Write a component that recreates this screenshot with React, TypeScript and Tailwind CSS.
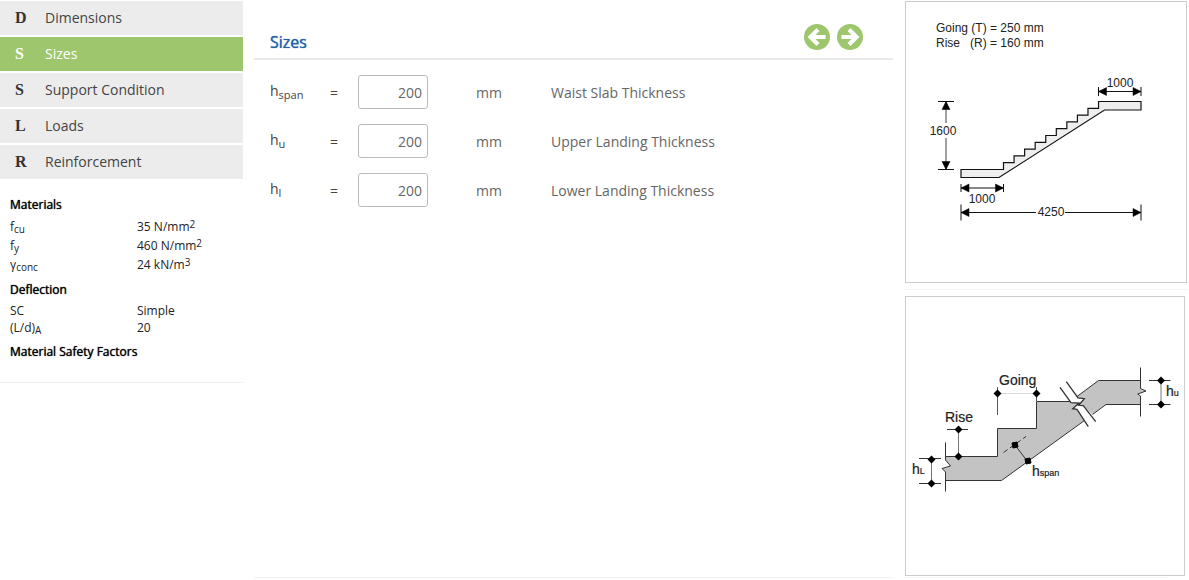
import { useState } from 'react'
import type { ReactNode } from 'react'

const menu = [
  { letter: 'D', label: 'Dimensions' },
  { letter: 'S', label: 'Sizes' },
  { letter: 'S', label: 'Support Condition' },
  { letter: 'L', label: 'Loads' },
  { letter: 'R', label: 'Reinforcement' },
]

const sizes = [
  { id: 'h-span', sub: 'span', description: 'Waist Slab Thickness' },
  { id: 'h-u', sub: 'u', description: 'Upper Landing Thickness' },
  { id: 'h-l', sub: 'l', description: 'Lower Landing Thickness' },
]

function Sidebar() {
  const [active, setActive] = useState(1)

  return (
    <aside className="w-[243px] shrink-0">
      <nav className="flex flex-col gap-0.5 pt-px">
        {menu.map((item, i) => (
          <button
            key={item.label}
            type="button"
            onClick={() => setActive(i)}
            className={`flex h-[34px] items-center pl-[15px] text-left text-sm ${
              i === active ? 'bg-[#9dc66d] text-white' : 'bg-[#ececec] text-[#444]'
            }`}
          >
            <span
              className={`w-[30px] font-['Liberation_Serif',serif] text-base font-bold ${
                i === active ? 'text-white' : 'text-[#333]'
              }`}
            >
              {item.letter}
            </span>
            {item.label}
          </button>
        ))}
      </nav>

      <div className="border-b border-[#f1f1f1] px-2.5 pt-[17px] pb-[21px] text-xs text-[#222]">
        <Heading>Materials</Heading>
        <dl className="mb-[7px] pt-[3px]">
          <Property name={<>f<Sub>cu</Sub></>} value={<>35 N/mm<Sup>2</Sup></>} />
          <Property name={<>f<Sub>y</Sub></>} value={<>460 N/mm<Sup>2</Sup></>} />
          <Property name={<>γ<Sub>conc</Sub></>} value={<>24 kN/m<Sup>3</Sup></>} />
        </dl>
        <Heading>Deflection</Heading>
        <dl className="mb-[7px] pt-[3px]">
          <Property name="SC" value="Simple" tight />
          <Property name={<>(L/d)<Sub>A</Sub></>} value="20" tight />
        </dl>
        <Heading>Material Safety Factors</Heading>
      </div>
    </aside>
  )
}

function Heading({ children }: { children: ReactNode }) {
  return <h3 className="leading-[18px] text-black [text-shadow:0_0_1px_currentColor]">{children}</h3>
}

function Sub({ children }: { children: ReactNode }) {
  return <sub className="text-[10px]">{children}</sub>
}

function Sup({ children }: { children: ReactNode }) {
  return <sup className="-top-[3px] text-[10px]">{children}</sup>
}

function Property({ name, value, tight }: { name: ReactNode; value: ReactNode; tight?: boolean }) {
  return (
    <div className={`flex items-center ${tight ? 'h-[17px]' : 'h-[19px]'}`}>
      <dt className="w-[127px]">{name}</dt>
      <dd>{value}</dd>
    </div>
  )
}

function ArrowIcon({ flip }: { flip?: boolean }) {
  return (
    <svg width="26" height="26" viewBox="0 0 26 26" fill="none" stroke="#fff" strokeWidth="4.2">
      <circle cx="13" cy="13" r="13" fill="#9dc66d" stroke="none" />
      <path d={flip ? 'M4.5 13H19M12 5.5L19.5 13L12 20.5' : 'M21.5 13H7M14 5.5L6.5 13L14 20.5'} />
    </svg>
  )
}

function SizesForm() {
  return (
    <main className="mr-3 ml-[11px] flex min-h-[578px] flex-1 flex-col border-b border-[#f1f1f1]">
      <header className="flex h-[60px] items-end justify-between border-b-2 border-[#eaeaea] pr-[30px] pb-2 pl-4">
        <h2 className="text-base leading-4 text-[#2460a7] [text-shadow:0_0_1px_currentColor]">Sizes</h2>
        <div className="flex gap-[7px]">
          <button type="button" aria-label="Previous">
            <ArrowIcon />
          </button>
          <button type="button" aria-label="Next">
            <ArrowIcon flip />
          </button>
        </div>
      </header>

      <form className="flex flex-col gap-[15px] pt-[15px] pl-4 text-sm text-[#666]">
        {sizes.map((size) => (
          <div key={size.id} className="grid grid-cols-[60px_28px_118px_75px_1fr] items-center">
            <label htmlFor={size.id} className="pb-0.5 text-[#444]">
              h<sub className="text-[11px]">{size.sub}</sub>
            </label>
            <span className="pt-0.5 text-[#444]">=</span>
            <input
              id={size.id}
              type="text"
              defaultValue="200"
              className="h-[34px] w-[70px] rounded-[3px] border border-[#bbb] px-[5px] text-right"
            />
            <span className="pt-0.5">mm</span>
            <span className="pt-0.5">{size.description}</span>
          </div>
        ))}
      </form>
    </main>
  )
}

// Pair of solid arrow heads at the ends of a horizontal dimension line
function ArrowHeads({ x1, x2, y }: { x1: number; x2: number; y: number }) {
  return <path d={`M${x1} ${y}l8 -4v8zM${x2} ${y}l-8 -4v8z`} fill="#000" stroke="#000" strokeWidth="0.5" />
}

function StairDiagram() {
  // ten risers going up from the lower landing
  let steps = ''
  for (let i = 0; i < 10; i++) {
    steps += `V${167.5 - 6.8 * (i + 1)}`
    if (i < 9) steps += `H${97.5 + 10.56 * (i + 1)}`
  }

  return (
    <svg
      viewBox="0 0 280 280"
      className="w-full font-['Liberation_Sans',sans-serif] text-xs"
      fill="none"
      stroke="#111"
    >
      <path d={`M55 167.5H97.5${steps}H235V108H198.5L93 175.5H55Z`} fill="#eee" strokeWidth="1.2" />

      <path d="M192.5 89.5H235M192.5 85V94M235 85V94" />
      <ArrowHeads x1={192.5} x2={235} y={89.5} />

      <path d="M40 99.5V121M40 136V167.5" stroke="#444" />
      <path d="M32 99.5H48M32 167.5H48" />
      <path d="M40 99.5l-4 8h8zM40 167.5l-4 -8h8z" fill="#000" stroke="#000" strokeWidth="0.5" />

      <path d="M55 186H97.5M55 182V190M97.5 182V190" />
      <ArrowHeads x1={55} x2={97.5} y={186} />

      <path d="M55 210.5H130M159 210.5H235M55 202.5V218.5M235 202.5V218.5" />
      <ArrowHeads x1={55} x2={235} y={210.5} />

      <g fill="#222" stroke="none">
        <text x="30" y="30">Going (T) = 250 mm</text>
        <text x="30" y="45">Rise</text>
        <text x="64" y="45">(R) = 160 mm</text>
        <g textAnchor="middle">
          <text x="214" y="85">1000</text>
          <text x="37" y="133">1600</text>
          <text x="76" y="201">1000</text>
          <text x="145" y="214">4250</text>
        </g>
      </g>
    </svg>
  )
}

function Dot({ x, y }: { x: number; y: number }) {
  return <path d={`M${x - 4} ${y}l4 -4l4 4l-4 4z`} fill="#000" stroke="none" />
}

function DetailDiagram() {
  return (
    <svg
      viewBox="0 0 278 278"
      className="w-full font-['Liberation_Sans',sans-serif] text-sm"
      fill="none"
      stroke="#333"
    >
      {/* concrete */}
      <path
        d="M39.5 159.5H91.5V131.5H130.5V104.5H164L165 105.7L173 106L166.7 111.7L171 112.3L178.5 123.5L95.5 183.5H39.5V175L36 171.5L44.5 169L39.5 163Z"
        fill="#c3c3c3"
        stroke="none"
      />
      <path
        d="M171 99.5L192.5 83.5H234.5V91.5L240 94L231.7 97L234.5 99V107.5H200L186.5 117.5L177.3 108.7L172.7 108.3L178.3 101.7L172 101Z"
        fill="#c3c3c3"
        stroke="none"
      />
      <path d="M39.5 159.5H91.5V131.5H130.5V104.5H164M178.5 123.5L95.5 183.5H39.5" />
      <path d="M171 99.5L192.5 83.5H234.5M234.5 107.5H200L186.5 117.5" />

      {/* break lines */}
      <path d="M39.5 145.5V163L44.5 169L36 171.5L39.5 175V194.5M234.5 70.5V91.5L240 94L231.7 97L234.5 99V119.5" />
      <path
        d="M154 90.3L165 105.7L173 106L166.7 111.7L171 112.3L182.3 129.7M160.3 84.7L172 101L178.3 101.7L172.7 108.3L177.3 108.7L189.7 124.7"
        strokeWidth="1.3"
      />

      {/* going */}
      <path d="M91.5 90V118M130.5 90V104" stroke="#555" />
      <path d="M91.5 96.5H130.5" stroke="#ddd" />
      <Dot x={91.5} y={96.5} />
      <Dot x={130.5} y={96.5} />

      {/* rise */}
      <path d="M52.5 132.5V159.5" stroke="#777" />
      <path d="M41 132.5H62" />
      <Dot x={52.5} y={132.5} />
      <Dot x={52.5} y={159.5} />

      {/* lower landing */}
      <path d="M25.5 162.5V186.5" stroke="#777" />
      <path d="M13 161.5H35M13 186.5H35" />
      <Dot x={25.5} y={162.5} />
      <Dot x={25.5} y={186.5} />

      {/* upper landing */}
      <path d="M255 83.5V107.5" stroke="#777" />
      <path d="M243 83.5H264.5M243 107.5H264.5" />
      <Dot x={255} y={83.5} />
      <Dot x={255} y={107.5} />

      {/* waist */}
      <path d="M97.5 155.5L120 139.5" strokeDasharray="5 3" />
      <path d="M109 148L121.5 164.5" />
      <path d="M106 146l5 -1l1 5l-5 1zM119 162l5 -1l1 5l-5 1z" fill="#000" stroke="#000" />

      <g fill="#222" stroke="#222" strokeWidth="0.2">
        <text x="93" y="88">Going</text>
        <text x="39" y="125">Rise</text>
        <text x="6" y="177">h<tspan fontSize="9">L</tspan></text>
        <text x="126" y="179">h<tspan fontSize="9">span</tspan></text>
        <text x="260" y="99">h<tspan fontSize="9">u</tspan></text>
      </g>
    </svg>
  )
}

export default function App() {
  return (
    <div className="flex bg-white font-['Open_Sans',sans-serif]">
      <Sidebar />
      <SizesForm />
      <section className="mr-0.5 w-[282px] shrink-0 pt-px">
        <div className="border border-[#ccc]">
          <StairDiagram />
        </div>
        <div className="my-1.5 border-b border-[#f3f3f3]" />
        <div className="mr-0.5 border border-[#ccc]">
          <DetailDiagram />
        </div>
        <div className="mt-px mr-5 border-b border-[#f3f3f3]" />
      </section>
    </div>
  )
}
